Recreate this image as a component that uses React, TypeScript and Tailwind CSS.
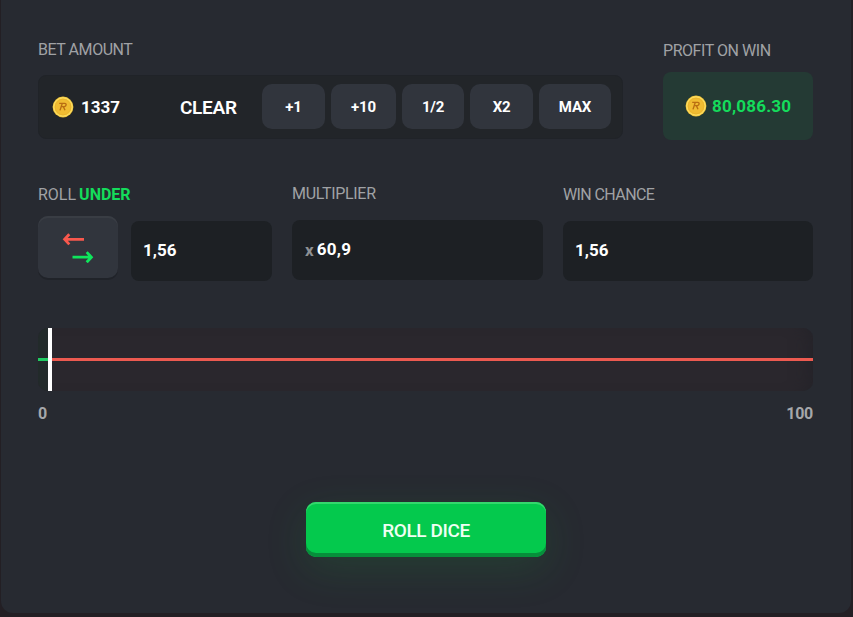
import { useState } from "react";
import type { ReactNode } from "react";
import clsx from "clsx";

const quickBets = [
  { label: "+1", width: "w-[63px]" },
  { label: "+10", width: "w-[65px]" },
  { label: "1/2", width: "w-[62px]" },
  { label: "X2", width: "w-[63px]" },
  { label: "MAX", width: "w-[72px]" },
];

function Coin() {
  return (
    <svg width="22" height="22" viewBox="0 0 22 22" className="shrink-0">
      <circle cx="11" cy="11" r="10.4" fill="#f3c838" />
      <circle cx="11" cy="11" r="9.2" fill="none" stroke="#ffe06e" strokeWidth="1" />
      <circle cx="11" cy="11" r="7.8" fill="#f0bc32" stroke="#e9b22c" strokeWidth="0.8" />
      <path
        d="M7.2 7.4H12.8C14.8 7.4 14.4 10.4 12.4 10.6H9.7M10.2 7.6L8 14.4M11.4 10.7L13 14.2"
        fill="none"
        stroke="#b96e12"
        strokeWidth="1.4"
      />
    </svg>
  );
}

function SwapArrows() {
  return (
    <svg width="32" height="32" viewBox="0 0 32 32" fill="none" strokeWidth="2.8">
      <path d="M22 8.3H3M7.3 3.2L2.6 8.3L7.3 13.4" stroke="#f8584d" />
      <path d="M10.5 26.2H29M24.7 21.1L29.4 26.2L24.7 31.3" stroke="#0fe65c" />
    </svg>
  );
}

function Label({ children, className }: { children: ReactNode; className?: string }) {
  return (
    <div className={clsx("h-5 whitespace-nowrap text-base leading-5 text-[#a0a2a5]", className)}>
      {children}
    </div>
  );
}

function Field({ children, className }: { children: ReactNode; className?: string }) {
  return (
    <div
      className={clsx(
        "flex h-[60px] items-center rounded-lg bg-[#1d2024] text-[17px] font-bold text-white",
        className
      )}
    >
      {children}
    </div>
  );
}

export default function App() {
  const [under, setUnder] = useState(true);
  const chance = 1.56;

  return (
    <div className="h-[617px] w-[853px] overflow-hidden bg-[#231f24] pb-1 pl-px pr-0.5 font-['Roboto','Liberation_Sans',sans-serif]">
      <main className="h-[613px] rounded-b-xl bg-[#272a31] pl-[37px] pr-[38px] pt-[39px]">
        {/* Bet amount and profit */}
        <section className="flex h-[145px] justify-between">
          <div className="w-[585px]">
            <Label className="pt-px tracking-[-0.45px]">BET AMOUNT</Label>
            <div className="mt-4 flex h-16 items-center rounded-lg border border-[#202328] bg-[#222529] pl-[13px] pr-[11px]">
              <Coin />
              <span className="ml-[7px] w-[99px] pt-px text-[17px] font-bold text-white">1337</span>
              <button className="w-[57px] pt-0.5 text-left text-[19px] font-semibold tracking-[-0.3px] text-white">
                CLEAR
              </button>
              <div className="mb-px ml-auto flex gap-1.5">
                {quickBets.map((bet) => (
                  <button
                    key={bet.label}
                    className={clsx(
                      "h-[45px] rounded-[10px] bg-[#31353d] pt-0.5 text-[15px] font-bold tracking-[-0.2px] text-white",
                      bet.width
                    )}
                  >
                    {bet.label}
                  </button>
                ))}
              </div>
            </div>
          </div>
          <div className="w-[150px] pt-px">
            <Label className="pt-px tracking-[-0.45px]">PROFIT ON WIN</Label>
            <div className="mt-3 flex h-[68px] items-center rounded-lg bg-[#243a34] pl-[22px]">
              <Coin />
              <span className="ml-[5px] pt-px text-[17px] font-bold tracking-[0.2px] text-[#14dc5b]">
                80,086.30
              </span>
            </div>
          </div>
        </section>

        {/* Roll settings */}
        <section className="flex h-36 gap-5">
          <div className="w-[234px]">
            <Label className="pt-px">
              ROLL{" "}
              <span className="-ml-px font-bold text-[#14dc5b]">{under ? "UNDER" : "OVER"}</span>
            </Label>
            <div className="mt-3 flex gap-[13px]">
              <button
                onClick={() => setUnder(!under)}
                className="flex h-[62px] w-20 items-center justify-center rounded-[10px] bg-[#31353d] shadow-[0_2px_0_#202329,inset_0_2px_0_#393d44]"
              >
                <SwapArrows />
              </button>
              <Field className="mt-[5px] w-[141px] pl-3">1,56</Field>
            </div>
          </div>
          <div className="w-[251px]">
            <Label className="tracking-[-0.3px]">MULTIPLIER</Label>
            <Field className="mt-4 pl-[13px] tracking-[0.2px]">
              <span className="mr-[3px] pt-0.5 text-[17px] text-[#8e9093]">x</span>60,9
            </Field>
          </div>
          <div className="w-[250px]">
            <Label className="pt-px tracking-[-0.6px]">WIN CHANCE</Label>
            <Field className="mt-[17px] pl-3">1,56</Field>
          </div>
        </section>

        {/* Slider */}
        <section>
          <div className="flex h-[63px] items-center overflow-hidden rounded-[10px] bg-[#2a272d] shadow-[inset_-18px_0_18px_-14px_#242329]">
            <div
              className="flex h-full items-center bg-[#222a2a]"
              style={{ width: `${(chance / 100) * 645}px` }}
            >
              <div className="h-[3px] w-full bg-[#20cc62]" />
            </div>
            <div className="h-full w-1 bg-white" />
            <div className="h-[3px] flex-1 bg-[#ed5a50]" />
          </div>
          <div className="mt-3 flex justify-between pt-px text-base font-bold leading-5 tracking-[-0.3px] text-[#a5a7aa]">
            <span>0</span>
            <span>100</span>
          </div>
        </section>

        <button className="ml-[268px] mt-[78px] block h-[55px] w-60 rounded-[10px] bg-[#04c94d] pt-[3px] text-[19px] font-medium tracking-[-0.4px] text-[#effff3] shadow-[0_12px_40px_#1f8f3a33,inset_0_2px_0_#35d76d,inset_0_-4px_0_#078f3b]">
          ROLL DICE
        </button>
      </main>
    </div>
  );
}
